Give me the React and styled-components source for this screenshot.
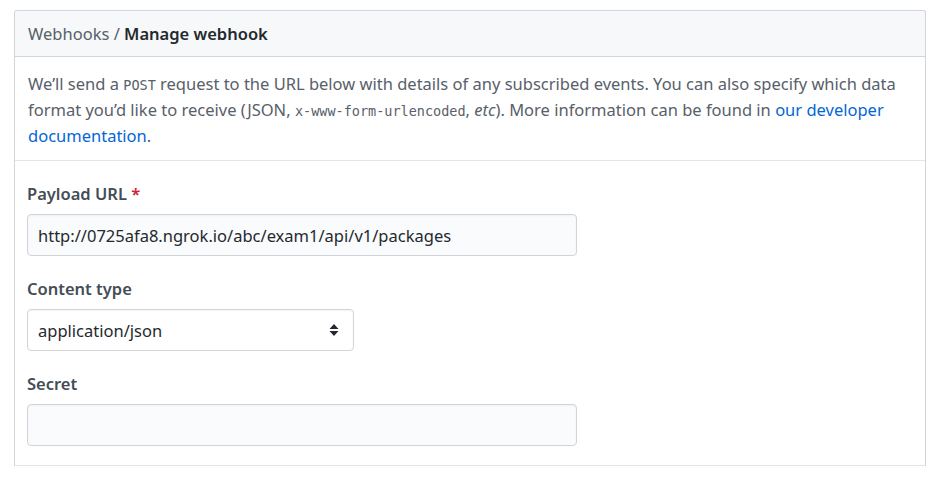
import React from "react";
import styled, { createGlobalStyle } from "styled-components";

const GlobalStyle = createGlobalStyle`
  html, body {
    margin: 0;
    padding: 0;
    background: #fff;
  }
  body {
    font-family: "Segoe UI", "Noto Sans", "Liberation Sans", sans-serif;
    color: #24292e;
  }
`;

const Page = styled.div`
  padding: 10px 17px 0 14px;
`;

const Box = styled.div`
  border: 1px solid #d1d5da;
  border-bottom: none;
  border-radius: 3px 3px 0 0;
`;

const BoxHeader = styled.div`
  background: #f6f8fa;
  border-bottom: 1px solid #d1d5da;
  border-radius: 3px 3px 0 0;
  height: 45px;
  padding: 0 13px;
  display: flex;
  align-items: center;
  font-size: 16.5px;
`;

const Crumb = styled.span`
  color: #586069;
`;

const Current = styled.strong`
  color: #24292e;
  font-weight: 600;
`;

const Intro = styled.p`
  margin: 0;
  padding: 14px 13px 11px;
  font-size: 16.5px;
  line-height: 26px;
  color: #586069;
  border-bottom: 1px solid #e1e4e8;
`;

const Code = styled.code`
  font-family: "DejaVu Sans Mono", "Liberation Mono", monospace;
  font-size: 13.5px;
  line-height: 1;
`;

const Link = styled.a`
  color: #0366d6;
  text-decoration: none;
`;

const Form = styled.div`
  padding: 20px 12px 19px;
  border-bottom: 1px solid #e1e4e8;
  display: flex;
  flex-direction: column;
  gap: 20px;
`;

const Field = styled.div`
  display: flex;
  flex-direction: column;
  gap: 7px;
`;

const Label = styled.label`
  font-size: 16.5px;
  line-height: 26px;
  font-weight: 600;
  color: #444d56;
`;

const Required = styled.span`
  color: #cb2431;
`;

const Input = styled.div`
  box-sizing: border-box;
  width: ${({ width }) => width}px;
  height: 42px;
  padding: 0 14px 0 10px;
  display: flex;
  align-items: center;
  justify-content: space-between;
  font-size: 16.5px;
  color: #24292e;
  background: ${({ plain }) => (plain ? "#fff" : "#fafbfc")};
  border: 1px solid #d1d5da;
  border-radius: 4px;
  box-shadow: inset 0 1px 2px rgba(27, 31, 35, 0.05);
`;

const Arrows = () => (
  <svg width="10" height="14" viewBox="0 0 10 14">
    <path d="M5 1 L9.5 6 H0.5 Z M5 13 L9.5 8 H0.5 Z" fill="#24292e" />
  </svg>
);

export default function App() {
  return (
    <>
      <GlobalStyle />
      <Page>
        <Box>
          <BoxHeader>
            <Crumb>Webhooks /&nbsp;</Crumb>
            <Current>Manage webhook</Current>
          </BoxHeader>
          <Intro>
            We’ll send a <Code>POST</Code> request to the URL below with details
            of any subscribed events. You can also specify which data format
            you’d like to receive (JSON, <Code>x-www-form-urlencoded</Code>,{" "}
            <em>etc</em>). More information can be found in{" "}
            <Link href="#">our developer documentation</Link>.
          </Intro>
          <Form>
            <Field>
              <Label>
                Payload URL <Required>*</Required>
              </Label>
              <Input width={550}>
                http://0725afa8.ngrok.io/abc/exam1/api/v1/packages
              </Input>
            </Field>
            <Field>
              <Label>Content type</Label>
              <Input width={327} plain>
                application/json
                <Arrows />
              </Input>
            </Field>
            <Field>
              <Label>Secret</Label>
              <Input width={550} />
            </Field>
          </Form>
        </Box>
      </Page>
    </>
  );
}
